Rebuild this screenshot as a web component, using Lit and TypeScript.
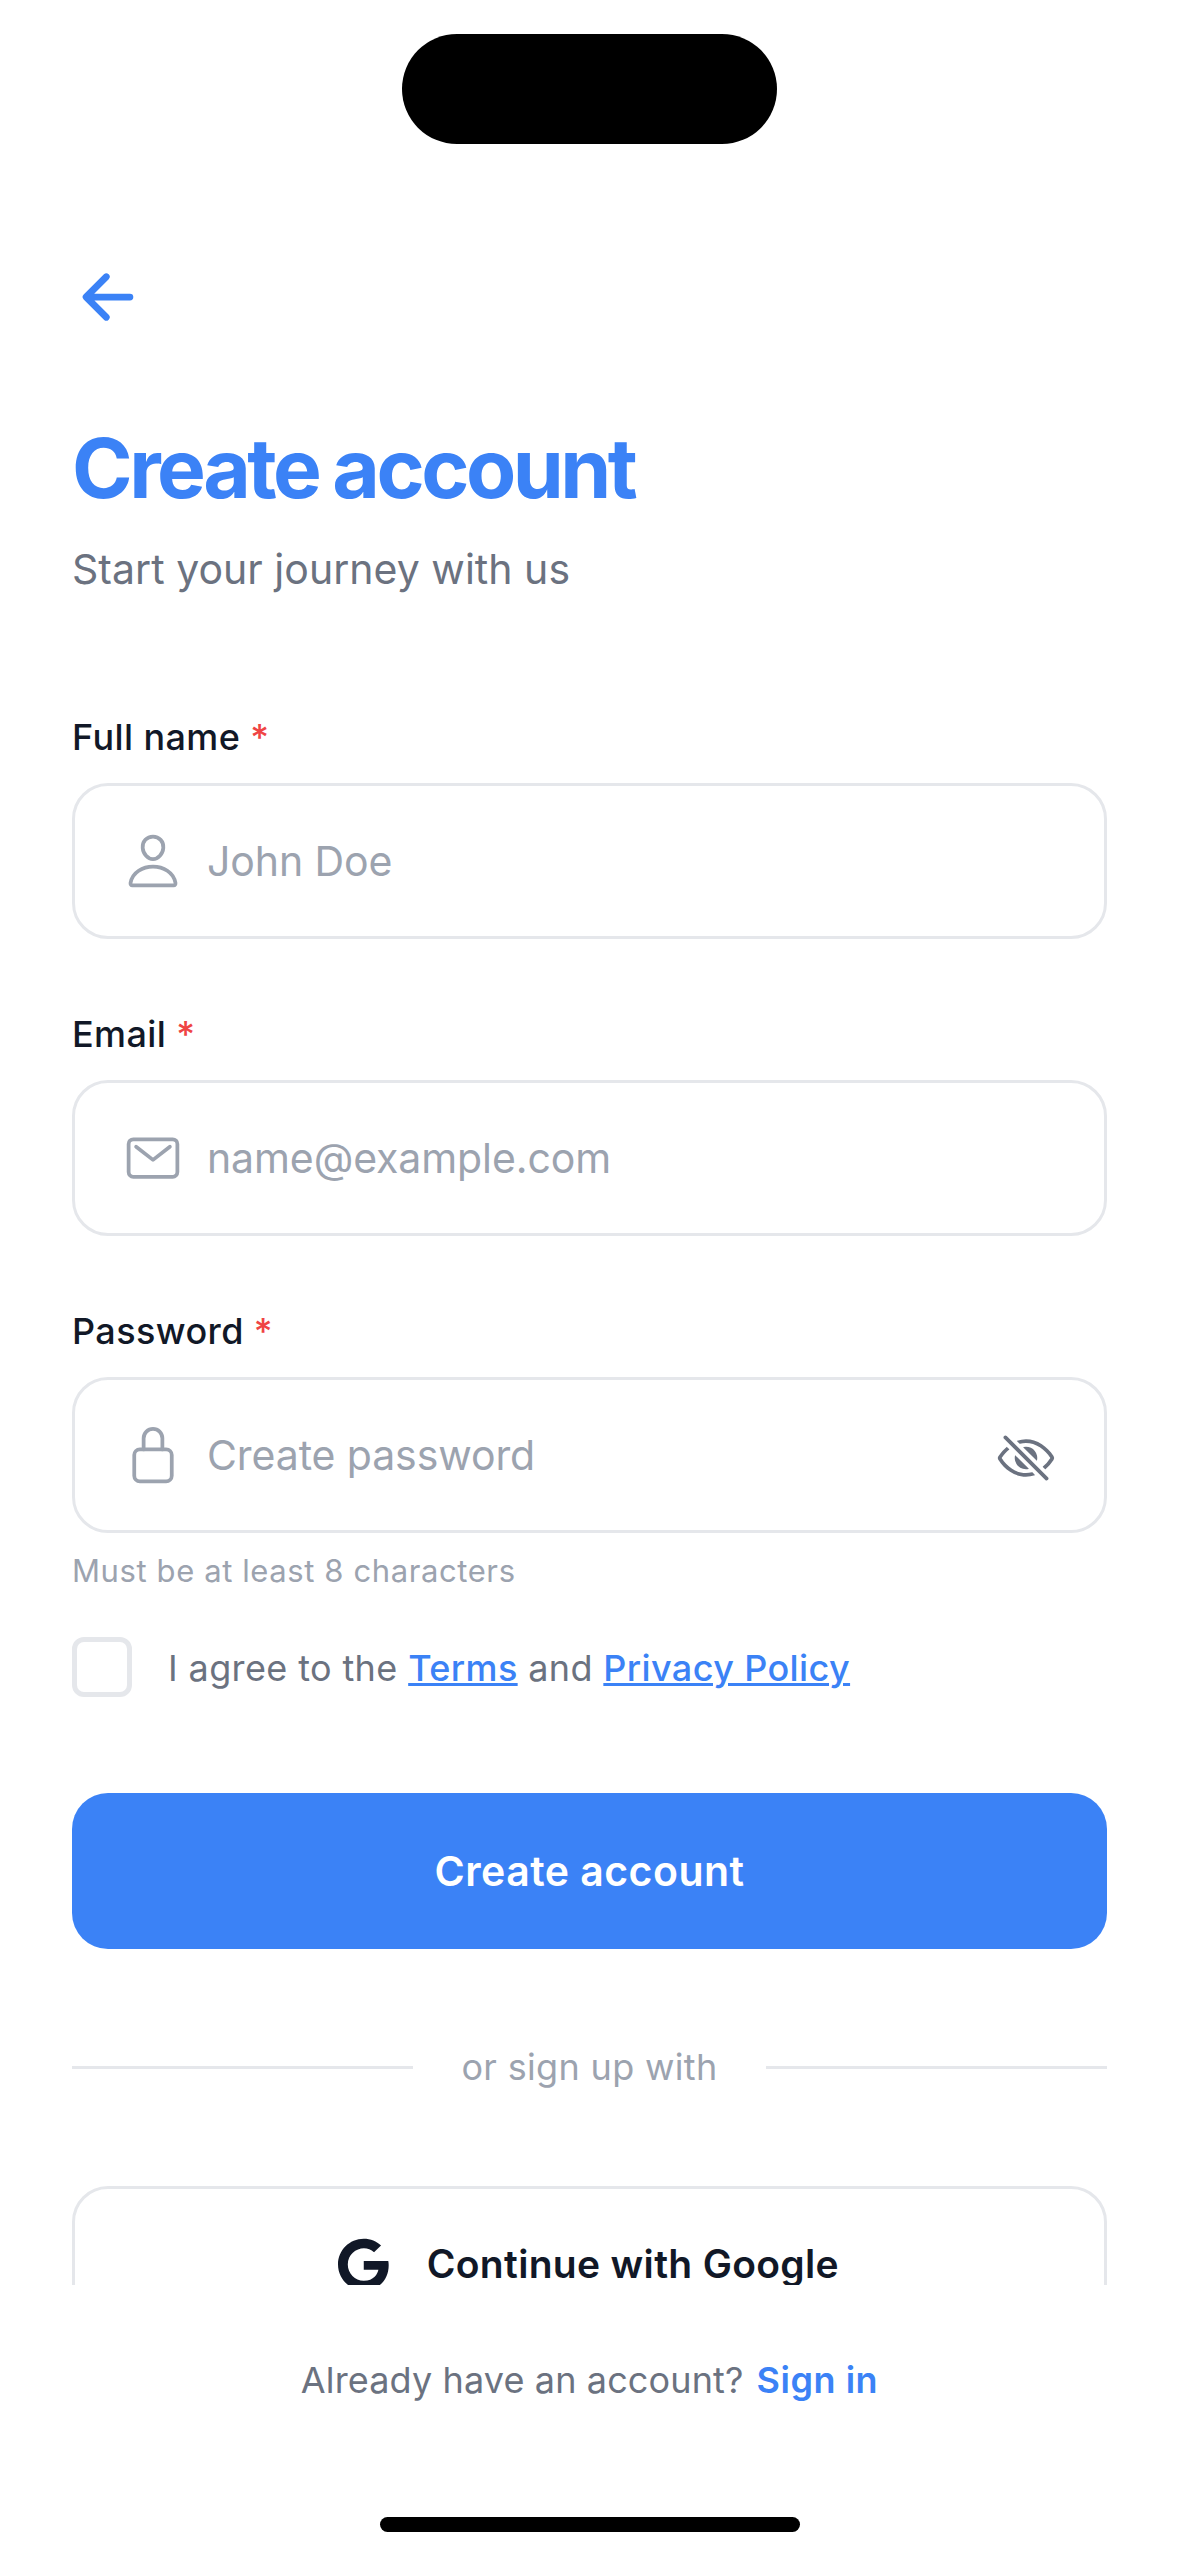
import { LitElement, html, css, svg, TemplateResult } from "lit";
import { customElement, property } from "lit/decorators.js";

const icons: Record<string, TemplateResult> = {
  person: svg`
    <path d="M344 144c-3.92 52.87-44 96-88 96s-84.15-43.12-88-96c-4-55 35-96 88-96s92 42 88 96z"/>
    <path d="M256 304c-87 0-175.3 48-191.64 138.6C62.39 453.52 68.57 464 80 464h352c11.44 0 17.62-10.48 15.65-21.4C431.3 352 343 304 256 304z"/>`,
  mail: svg`
    <rect x="48" y="96" width="416" height="320" rx="40" ry="40"/>
    <path d="M112 160l144 112 144-112"/>`,
  lock: svg`
    <path d="M336 208v-95a80 80 0 00-160 0v95"/>
    <rect x="96" y="208" width="320" height="272" rx="48" ry="48"/>`,
};

@customElement("form-field")
export class FormField extends LitElement {
  @property() label = "";
  @property() hint = "";
  @property() icon = "";
  @property({ type: Boolean }) secret = false;

  static styles = css`
    :host {
      display: block;
      letter-spacing: 0;
    }
    .label {
      display: flex;
      gap: 10px;
      height: 48px;
      margin-bottom: 22px;
      font-size: 36px;
      line-height: 48px;
      font-weight: 500;
      letter-spacing: 0.4px;
      color: #111827;
    }
    .required {
      color: #ef4444;
    }
    .box {
      box-sizing: border-box;
      display: flex;
      align-items: center;
      height: 156px;
      padding: 0 48px;
      border: 3px solid #e5e7eb;
      border-radius: 36px;
      color: #9ca3af;
    }
    .glyph {
      width: 60px;
      height: 60px;
      margin-right: 24px;
      fill: none;
      stroke: currentColor;
      stroke-width: 32;
      stroke-linecap: round;
      stroke-linejoin: round;
    }
    .hint {
      flex: 1;
      font-size: 41px;
      line-height: 60px;
      letter-spacing: -0.1px;
    }
    .eye {
      width: 60px;
      height: 60px;
      margin-top: 6px;
      fill: #6b7280;
    }
  `;

  render() {
    return html`
      <div class="label"><span>${this.label}</span><span class="required">*</span></div>
      <div class="box">
        <svg class="glyph" viewBox="0 0 512 512">${icons[this.icon]}</svg>
        <span class="hint">${this.hint}</span>
        ${this.secret
          ? html`<svg class="eye" viewBox="0 0 512 512">
              <path d="M432 448a15.92 15.92 0 01-11.31-4.69l-352-352a16 16 0 0122.62-22.62l352 352A16 16 0 01432 448z"/>
              <path d="M255.66 384c-41.49 0-81.5-12.28-118.92-36.5-34.07-22-64.74-53.51-88.7-91v-.08c19.94-28.57 41.78-52.73 65.24-72.21a2 2 0 00.14-2.94L93.5 161.38a2 2 0 00-2.71-.12c-24.92 21-48.05 46.76-69.08 76.92a31.92 31.92 0 00-.64 35.54c26.41 41.33 60.4 76.14 98.28 100.65C162 402 207.9 416 255.66 416a239.13 239.13 0 0075.8-12.58 2 2 0 00.77-3.31l-21.58-21.58a4 4 0 00-3.83-1 204.8 204.8 0 01-51.16 6.47z"/>
              <path d="M490.84 238.6c-26.46-40.92-60.79-75.68-99.27-100.53C349 110.55 302 96 255.66 96a227.34 227.34 0 00-74.89 12.83 2 2 0 00-.75 3.31l21.55 21.55a4 4 0 003.88 1 192.82 192.82 0 0150.21-6.69c40.69 0 80.58 12.43 118.55 37 34.71 22.4 65.74 53.88 89.76 91a.13.13 0 010 .16 310.72 310.72 0 01-64.12 72.73 2 2 0 00-.15 2.95l19.9 19.89a2 2 0 002.7.13 343.49 343.49 0 0068.64-78.48 32.2 32.2 0 00-.1-34.78z"/>
              <path d="M256 160a95.88 95.88 0 00-21.37 2.4 2 2 0 00-1 3.38l112.59 112.56a2 2 0 003.38-1A96 96 0 00256 160zM165.78 233.66a2 2 0 00-3.38 1 96 96 0 00115 115 2 2 0 001-3.38z"/>
            </svg>`
          : ""}
      </div>
    `;
  }
}

@customElement("app-root")
export class AppRoot extends LitElement {
  static styles = css`
    :host {
      display: block;
      font-family: Inter, "Liberation Sans", sans-serif;
    }
    .screen {
      display: flex;
      flex-direction: column;
      width: 1179px;
      height: 2556px;
      background: #fff;
      overflow: hidden;
    }
    .scroll {
      flex: none;
      box-sizing: border-box;
      height: 2285px;
      padding: 0 72px;
      overflow: hidden;
    }
    .status {
      box-sizing: border-box;
      height: 261px;
      padding-top: 33.5px;
    }
    .island {
      width: 375.5px;
      height: 110.5px;
      margin: 0 auto;
      border-radius: 56px;
      background: #000;
    }
    .back {
      display: block;
      width: 72px;
      height: 72px;
      fill: none;
      stroke: #3b82f6;
      stroke-width: 48;
      stroke-linecap: round;
      stroke-linejoin: round;
    }
    .title {
      margin: 86px 0 20px;
      font-size: 82px;
      line-height: 100px;
      font-weight: 700;
      letter-spacing: -3.5px;
      word-spacing: -2px;
      color: #3b82f6;
    }
    .subtitle {
      margin: 0 0 114px;
      font-size: 41px;
      line-height: 60px;
      letter-spacing: 0.03px;
      color: #6b7280;
    }
    .fields {
      display: flex;
      flex-direction: column;
      gap: 71px;
    }
    .helper {
      margin: 18px 0 46px;
      font-size: 31px;
      line-height: 40px;
      letter-spacing: 0.6px;
      color: #9ca3af;
    }
    .agree {
      display: flex;
      gap: 36px;
      height: 60px;
      margin-bottom: 96px;
    }
    .check {
      box-sizing: border-box;
      width: 60px;
      height: 60px;
      border: 5px solid #e5e7eb;
      border-radius: 12px;
    }
    .agree-text {
      font-size: 36px;
      line-height: 62px;
      letter-spacing: 0.38px;
      color: #6b7280;
    }
    .link {
      font-weight: 500;
      color: #3b82f6;
      text-decoration: underline;
      text-decoration-thickness: 3px;
      text-underline-offset: 2px;
    }
    .primary {
      display: flex;
      align-items: center;
      justify-content: center;
      height: 156px;
      border-radius: 36px;
      background: #3b82f6;
      color: #fff;
      font-size: 41px;
      line-height: 60px;
      font-weight: 600;
      letter-spacing: 0.47px;
    }
    .divider {
      display: flex;
      align-items: center;
      justify-content: space-between;
      height: 47px;
      margin: 95px 0;
      font-size: 36px;
      line-height: 49px;
      letter-spacing: 0.33px;
      color: #9ca3af;
    }
    .rule {
      width: 341px;
      height: 3px;
      background: #e5e7eb;
    }
    .google {
      box-sizing: border-box;
      display: flex;
      align-items: center;
      justify-content: center;
      gap: 38px;
      height: 156px;
      padding-right: 2px;
      border: 3px solid #e5e7eb;
      border-radius: 36px;
      color: #111827;
      font-size: 39px;
      line-height: 56px;
      font-weight: 600;
      letter-spacing: 0.32px;
    }
    .g-mark {
      width: 50.7px;
      height: 53.2px;
      margin-top: 1.5px;
      fill: currentColor;
    }
    .footer {
      display: flex;
      justify-content: center;
      gap: 13px;
      padding-top: 71px;
      font-size: 36px;
      line-height: 48px;
      letter-spacing: 0.13px;
      color: #6b7280;
    }
    .signin {
      font-weight: 600;
      letter-spacing: 0.53px;
      color: #3b82f6;
    }
    .home {
      width: 420px;
      height: 15px;
      margin: auto auto 24px;
      border-radius: 8px;
      background: #000;
    }
  `;

  render() {
    return html`
      <div class="screen">
        <div class="scroll">
          <div class="status"><div class="island"></div></div>
          <svg class="back" viewBox="0 0 512 512">
            <path d="M244 400L100 256l144-144M120 256h292"/>
          </svg>
          <h1 class="title">Create account</h1>
          <p class="subtitle">Start your journey with us</p>
          <div class="fields">
            <form-field label="Full name" icon="person" hint="John Doe"></form-field>
            <form-field label="Email" icon="mail" hint="name@example.com"></form-field>
            <form-field label="Password" icon="lock" hint="Create password" secret></form-field>
          </div>
          <p class="helper">Must be at least 8 characters</p>
          <div class="agree">
            <div class="check"></div>
            <div class="agree-text">I agree to the <span class="link">Terms</span> and <span class="link">Privacy Policy</span></div>
          </div>
          <div class="primary">Create account</div>
          <div class="divider">
            <div class="rule"></div>
            <span>or sign up with</span>
            <div class="rule"></div>
          </div>
          <div class="google">
            <svg class="g-mark" viewBox="0 0 488 512">
              <path d="M488 261.8C488 403.3 391.1 504 248 504 110.8 504 0 393.2 0 256S110.8 8 248 8c66.8 0 123 24.5 166.3 64.9l-67.5 64.9C258.5 52.6 94.3 116.6 94.3 256c0 86.5 69.1 156.6 153.7 156.6 98.2 0 135-70.4 140.8-106.9H248v-85.3h236.1c2.3 12.7 3.9 24.9 3.9 41.4z"/>
            </svg>
            <span>Continue with Google</span>
          </div>
        </div>
        <div class="footer">
          <span>Already have an account?</span>
          <span class="signin">Sign in</span>
        </div>
        <div class="home"></div>
      </div>
    `;
  }
}
